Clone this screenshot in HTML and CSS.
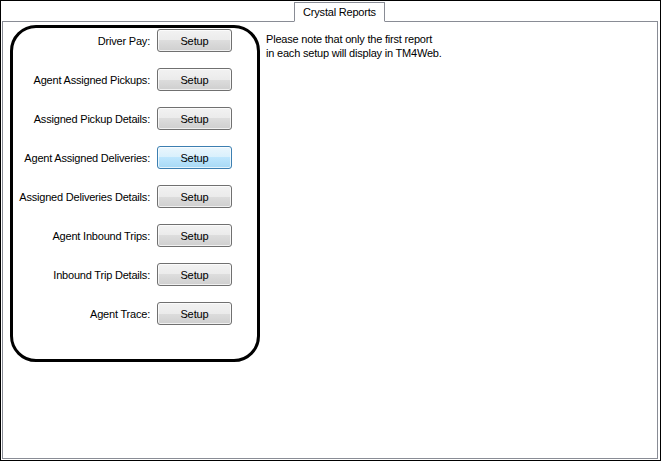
FILE: index.html
```html
<!DOCTYPE html>
<html>
<head>
<meta charset="utf-8">
<link rel="stylesheet" href="styles.css">
</head>
<body>
<div class="window">
  <div class="tabstrip">
    <div class="tab">Crystal Reports</div>
  </div>
  <div class="panel">
    <div class="group">
      <div class="row"><span class="label">Driver Pay:</span><button class="btn">Setup</button></div>
      <div class="row"><span class="label">Agent Assigned Pickups:</span><button class="btn">Setup</button></div>
      <div class="row"><span class="label">Assigned Pickup Details:</span><button class="btn">Setup</button></div>
      <div class="row"><span class="label">Agent Assigned Deliveries:</span><button class="btn focus">Setup</button></div>
      <div class="row"><span class="label">Assigned Deliveries Details:</span><button class="btn">Setup</button></div>
      <div class="row"><span class="label">Agent Inbound Trips:</span><button class="btn">Setup</button></div>
      <div class="row"><span class="label">Inbound Trip Details:</span><button class="btn">Setup</button></div>
      <div class="row"><span class="label">Agent Trace:</span><button class="btn">Setup</button></div>
    </div>
    <div class="note">Please note that only the first report<br>in each setup will display in TM4Web.</div>
  </div>
</div>
</body>
</html>
```
FILE: styles.css
```css
* { box-sizing: border-box; }
html, body { margin: 0; padding: 0; background: #fff; }
body {
  font-family: "Liberation Sans", Arial, sans-serif;
  font-size: 11px;
  letter-spacing: -0.2px;
  color: #000;
}
.window {
  width: 661px;
  height: 461px;
  border: 1px solid #000;
  padding: 1px 2px 1px 1px;
  display: flex;
  flex-direction: column;
  background: #fff;
}
.tabstrip {
  display: flex;
  padding-left: 292px;
  height: 20px;
  position: relative;
  z-index: 1;
}
.tab {
  width: 91px;
  height: 20px;
  border: 1px solid #898c95;
  border-bottom: 1px solid #fff;
  background: #fff;
  text-align: center;
  line-height: 18px;
  font-size: 11px;
}
.panel {
  flex: 1;
  margin-top: -1px;
  border: 1px solid #898c95;
  display: flex;
  align-items: flex-start;
  padding: 3px 0 0 7px;
}
.group {
  width: 250px;
  height: 337px;
  border: 3px solid #000;
  border-radius: 26px;
  padding: 1px 25px 0 0;
  display: flex;
  flex-direction: column;
  gap: 16px;
}
.row {
  display: flex;
  justify-content: flex-end;
  align-items: center;
  gap: 7px;
  height: 23px;
}
.label { white-space: nowrap; }
.btn {
  width: 75px;
  height: 23px;
  border: 1px solid #707070;
  border-radius: 3px;
  background: linear-gradient(#f2f2f2 0%, #ebebeb 50%, #dddddd 50%, #cfcfcf 100%);
  font-family: "Liberation Sans", Arial, sans-serif;
  font-size: 11px;
  letter-spacing: -0.1px;
  color: #000;
  padding: 0;
  box-shadow: inset 0 0 0 1px rgba(255,255,255,0.7);
}
.btn.focus {
  border-color: #3c7fb1;
  background: linear-gradient(#eaf6fd 0%, #d9f0fc 50%, #bee6fd 50%, #a7d9f5 100%);
}
.note {
  margin-left: 6px;
  margin-top: 7px;
  line-height: 14px;
}
```
